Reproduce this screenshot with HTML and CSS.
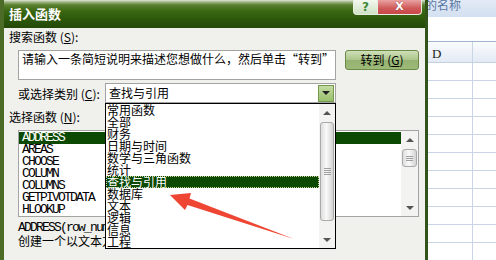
FILE: index.html
```html
<!DOCTYPE html>
<html lang="zh-CN">
<head>
  <meta charset="UTF-8">
  <meta name="viewport" content="width=device-width, initial-scale=1">
  <title>插入函数</title>
  <link rel="stylesheet" href="styles.css">
</head>
<body>
  <div class="screen">
    <div class="dialog">
      <div class="titlebar">
        <span class="title">插入函数</span>
        <div class="caption-btns">
          <span class="help-btn">?</span>
          <span class="close-btn">X</span>
        </div>
      </div>
      <div class="content">
        <div class="label first">搜索函数 (<u>S</u>):</div>
        <div class="search-row">
          <div class="search-box">请输入一条简短说明来描述您想做什么，然后单击“转到”</div>
          <button class="go-btn">转到 (<u>G</u>)</button>
        </div>
        <div class="category-row">
          <span class="cat-label">或选择类别 (<u>C</u>):</span>
          <div class="combo">
            <span class="combo-text">查找与引用</span>
            <span class="combo-arrow"><i class="tri-down"></i></span>
          </div>
        </div>
        <div class="label pick">选择函数 (<u>N</u>):</div>
        <div class="func-list">
          <ul class="funcs">
            <li class="selected">ADDRESS</li>
            <li>AREAS</li>
            <li>CHOOSE</li>
            <li>COLUMN</li>
            <li>COLUMNS</li>
            <li>GETPIVOTDATA</li>
            <li>HLOOKUP</li>
          </ul>
          <div class="scrollbar small">
            <div class="sb-btn"><i class="tri-up"></i></div>
            <div class="sb-track"><div class="thumb"><b></b><b></b><b></b></div></div>
            <div class="sb-btn"><i class="tri-down"></i></div>
          </div>
        </div>
        <div class="desc">ADDRESS(row_num,column_num,abs_num,a1,sheet_text)</div>
        <div class="desc-cn">创建一个以文本方式对工作簿中某一单元格的引用</div>
      </div>

      <div class="dropdown">
        <ul class="cats">
          <li>常用函数</li>
          <li>全部</li>
          <li>财务</li>
          <li>日期与时间</li>
          <li>数学与三角函数</li>
          <li>统计</li>
          <li class="selected">查找与引用</li>
          <li>数据库</li>
          <li>文本</li>
          <li>逻辑</li>
          <li>信息</li>
          <li>工程</li>
        </ul>
        <div class="scrollbar tall">
          <div class="sb-btn"><i class="tri-up"></i></div>
          <div class="sb-track"><div class="thumb"><b></b><b></b><b></b><b></b></div></div>
          <div class="sb-btn"><i class="tri-down"></i></div>
        </div>
      </div>

      <svg class="pointer" width="140" height="60" viewBox="0 0 140 60">
        <polygon points="10,10 31,8 29.5,13.5 134,54 27.5,20 25,25" fill="#ef4634"/>
      </svg>
    </div>

    <div class="sheet">
      <div class="name-box">的名称</div>
      <div class="formula"></div>
      <div class="col-head">
        <div class="cell">D</div>
        <div class="cell"></div>
      </div>
      <div class="row"><div class="cell"></div><div class="cell"></div></div>
      <div class="row"><div class="cell"></div><div class="cell"></div></div>
      <div class="row"><div class="cell"></div><div class="cell"></div></div>
      <div class="row"><div class="cell"></div><div class="cell"></div></div>
      <div class="row"><div class="cell"></div><div class="cell"></div></div>
      <div class="row"><div class="cell"></div><div class="cell"></div></div>
      <div class="row"><div class="cell"></div><div class="cell"></div></div>
      <div class="row"><div class="cell"></div><div class="cell"></div></div>
      <div class="row"><div class="cell"></div><div class="cell"></div></div>
      <div class="row"><div class="cell"></div><div class="cell"></div></div>
      <div class="row"><div class="cell"></div><div class="cell"></div></div>
    </div>
  </div>
</body>
</html>
```

FILE: styles.css
```css
* {
  box-sizing: border-box;
}

body {
  margin: 0;
  font-family: "Noto Sans CJK SC", "Liberation Sans", sans-serif;
  font-size: 12px;
  color: #000;
}

ul {
  list-style: none;
  margin: 0;
  padding: 0;
}

u {
  text-decoration: underline;
}

.screen {
  display: flex;
  width: 496px;
  height: 260px;
  overflow: hidden;
}

/* dialog */
.dialog {
  position: relative;
  width: 428px;
  height: 260px;
  flex-shrink: 0;
  background: #f0f0ed;
  border-left: 4px solid #4b6b27;
  border-right: 3px solid #32531a;
}

.titlebar {
  display: flex;
  align-items: flex-start;
  height: 28px;
  background: linear-gradient(to bottom, #e4e8dc 0, #9fb684 2px, #5a8030 5px, #3a6812 11px, #2b560a 20px, #24480a 28px);
}

.title {
  margin: 6px 0 0 5px;
  line-height: 16px;
  font-size: 13px;
  font-weight: bold;
  color: #fff;
}

.caption-btns {
  display: flex;
  margin-left: auto;
  margin-right: 3px;
}

.help-btn,
.close-btn {
  height: 15px;
  line-height: 14px;
  text-align: center;
  font-family: "DejaVu Sans", sans-serif;
  font-weight: bold;
  border: 1px solid #e8eee0;
  border-top: none;
}

.help-btn {
  width: 25px;
  font-size: 12px;
  color: #3f8a3a;
  background: linear-gradient(to bottom, #f4f8ef, #cfe2c4);
  border-radius: 0 0 0 4px;
}

.close-btn {
  width: 44px;
  font-size: 11px;
  color: #fff;
  text-shadow: 0 0 1px #7a2020;
  background: linear-gradient(to bottom, #e9a2a2, #d05858 60%, #c84848);
  border-left: none;
  border-radius: 0 0 4px 0;
}

.content {
  padding-left: 5px;
}

.label {
  line-height: 14px;
}

.label.first {
  margin-top: 2px;
}

.label.pick {
  margin-top: 7px;
}

.search-row {
  display: flex;
  align-items: flex-start;
  gap: 9px;
  margin: 6px 0 0 9px;
}

.search-box {
  width: 318px;
  height: 30px;
  padding: 1px 3px;
  line-height: 14px;
  background: #fff;
  border: 1px solid #a3a3a3;
  white-space: nowrap;
  overflow: hidden;
}

.go-btn {
  width: 74px;
  height: 20px;
  padding: 0;
  font: inherit;
  line-height: 16px;
  color: #000;
  background: linear-gradient(to bottom, #cfdfb8, #abc58a 50%, #95b272 52%, #9dba78);
  border: 1px solid #6a8a45;
  border-radius: 3px;
}

.category-row {
  display: flex;
  align-items: center;
  margin: 3px 0 0 9px;
  height: 20px;
}

.cat-label {
  width: 87px;
  line-height: 14px;
  padding-top: 2px;
}

.combo {
  display: flex;
  align-items: center;
  width: 231px;
  height: 20px;
  padding: 1px;
  background: #fff;
  border: 1px solid #a3a3a3;
}

.combo-text {
  flex: 1;
  padding-left: 2px;
  line-height: 16px;
}

.combo-arrow {
  display: flex;
  align-items: center;
  justify-content: center;
  width: 16px;
  height: 17px;
  background: linear-gradient(to bottom, #c4dca4, #99bf6c);
  border: 1px solid #74984d;
}

.tri-down,
.tri-up {
  display: block;
  width: 0;
  height: 0;
  border-left: 4px solid transparent;
  border-right: 4px solid transparent;
}

.tri-down {
  border-top: 4px solid #222;
}

.tri-up {
  border-bottom: 4px solid #222;
}

.func-list {
  display: flex;
  width: 401px;
  height: 87px;
  margin: 6px 0 0 9px;
  background: #fff;
  border: 1px solid #a3a3a3;
}

.funcs {
  flex: 1;
  padding-top: 1px;
  font-family: "Liberation Mono", monospace;
  font-size: 13px;
  letter-spacing: -1.8px;
}

.funcs li {
  height: 12px;
  line-height: 12px;
  padding-left: 3px;
}

.funcs li.selected,
.cats li.selected {
  background: #0c4a04;
  color: #fff;
}

.desc {
  margin: 4px 0 0 9px;
  line-height: 13px;
  font-family: "Liberation Mono", monospace;
  font-size: 13px;
  letter-spacing: -1.8px;
  white-space: nowrap;
}

.desc-cn {
  margin-left: 9px;
  line-height: 13px;
  white-space: nowrap;
}

/* scrollbars */
.scrollbar {
  display: flex;
  flex-direction: column;
  background: #f3f3f1;
}

.scrollbar.small {
  width: 17px;
}

.scrollbar.tall {
  width: 16px;
}

.sb-btn {
  display: flex;
  align-items: center;
  justify-content: center;
  height: 17px;
}

.sb-btn .tri-up {
  border-bottom-color: #555;
}

.sb-btn .tri-down {
  border-top-color: #555;
}

.sb-track {
  flex: 1;
  padding: 1px 1px 0;
}

.thumb {
  display: flex;
  flex-direction: column;
  justify-content: center;
  align-items: center;
  gap: 1px;
  border: 1px solid #a9a9a9;
  border-radius: 3px;
  background: linear-gradient(to right, #dedede, #f9f9f9 45%, #d4d4d4);
}

.thumb b {
  display: block;
  width: 7px;
  height: 1px;
  background: #a0a0a0;
}

.small .thumb {
  height: 18px;
}

.tall .thumb {
  height: 99px;
}

/* open category list */
.dropdown {
  position: absolute;
  left: 101px;
  top: 103px;
  display: flex;
  width: 231px;
  height: 146px;
  background: #fff;
  border: 1px solid #000;
}

.cats {
  flex: 1;
}

.cats li {
  height: 12px;
  line-height: 12px;
  padding-left: 1px;
  white-space: nowrap;
}

.cats li.selected {
  outline: 1px dotted #c9d6a0;
  outline-offset: -1px;
}

.pointer {
  position: absolute;
  left: 156px;
  top: 185px;
}

/* spreadsheet behind */
.sheet {
  flex: 1;
  overflow: hidden;
  background: #fff;
}

.name-box {
  height: 17px;
  margin-left: -3px;
  line-height: 10px;
  font-size: 12px;
  color: #5a78a5;
  background: linear-gradient(to bottom, #e2eaf5, #d3e0f1);
  white-space: nowrap;
  overflow: hidden;
}

.formula {
  height: 25px;
  border-bottom: 1px solid #9fb4cf;
}

.col-head {
  display: flex;
  height: 21px;
  background: linear-gradient(to bottom, #fafcfe, #e3eaf4);
  border-bottom: 1px solid #c4d1e3;
}

.col-head .cell {
  padding: 5px 0 0 4px;
  font-family: "Liberation Serif", serif;
  font-size: 13px;
  line-height: 14px;
  color: #222;
}

.row {
  display: flex;
  height: 18px;
  border-bottom: 1px solid #c9d5e6;
}

.cell {
  flex: 1;
}

.cell:first-child {
  flex: 0 0 45px;
  border-right: 1px solid #c9d5e6;
}
```
